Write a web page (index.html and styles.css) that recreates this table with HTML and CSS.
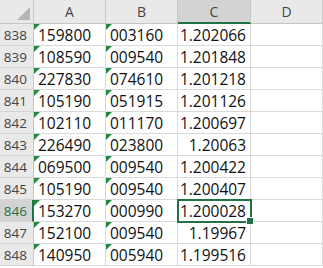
FILE: index.html
```html
<!DOCTYPE html>
<html>
<head>
<meta charset="utf-8">
<link rel="stylesheet" href="styles.css">
</head>
<body>
<div class="sheet">
  <div class="corner"><span class="tri"></span></div>
  <div class="colh">A</div>
  <div class="colh">B</div>
  <div class="colh sel">C</div>
  <div class="colh">D</div>

  <div class="rowh">838</div><div class="cell t">159800</div><div class="cell t">003160</div><div class="cell n">1.202066</div><div class="cell"></div>
  <div class="rowh">839</div><div class="cell t">108590</div><div class="cell t">009540</div><div class="cell n">1.201848</div><div class="cell"></div>
  <div class="rowh">840</div><div class="cell t">227830</div><div class="cell t">074610</div><div class="cell n">1.201218</div><div class="cell"></div>
  <div class="rowh">841</div><div class="cell t">105190</div><div class="cell t">051915</div><div class="cell n">1.201126</div><div class="cell"></div>
  <div class="rowh">842</div><div class="cell t">102110</div><div class="cell t">011170</div><div class="cell n">1.200697</div><div class="cell"></div>
  <div class="rowh">843</div><div class="cell t">226490</div><div class="cell t">023800</div><div class="cell n">1.20063</div><div class="cell"></div>
  <div class="rowh">844</div><div class="cell t">069500</div><div class="cell t">009540</div><div class="cell n">1.200422</div><div class="cell"></div>
  <div class="rowh">845</div><div class="cell t">105190</div><div class="cell t">009540</div><div class="cell n">1.200407</div><div class="cell"></div>
  <div class="rowh sel">846</div><div class="cell t">153270</div><div class="cell t">000990</div><div class="cell n active">1.200028<span class="handle"></span></div><div class="cell"></div>
  <div class="rowh">847</div><div class="cell t">152100</div><div class="cell t">009540</div><div class="cell n">1.19967</div><div class="cell"></div>
  <div class="rowh">848</div><div class="cell t">140950</div><div class="cell t">005940</div><div class="cell n">1.199516</div><div class="cell"></div>
</div>
</body>
</html>
```

FILE: styles.css
```css
html, body {
  margin: 0;
  padding: 0;
  background: #ffffff;
}
.sheet {
  display: grid;
  grid-template-columns: 34px 72px 72px 73px 72px;
  grid-template-rows: 24px repeat(11, 22px);
  font-family: "Open Sans", "Noto Sans", sans-serif;
}
.corner {
  position: relative;
  background: #e9e9e9;
  border-right: 1px solid #c6c6c6;
  border-bottom: 1px solid #c6c6c6;
}
.corner .tri {
  position: absolute;
  right: 3px;
  bottom: 3px;
  width: 0;
  height: 0;
  border-left: 13px solid transparent;
  border-bottom: 13px solid #b5b5b5;
}
.colh {
  background: #e9e9e9;
  border-right: 1px solid #c6c6c6;
  border-bottom: 1px solid #c6c6c6;
  font-size: 14px;
  color: #444;
  display: flex;
  align-items: center;
  justify-content: center;
  padding-bottom: 1px;
}
.colh.sel {
  background: #d3d3d3;
  border-bottom: 2px solid #217346;
  padding-bottom: 0;
}
.rowh {
  background: #e9e9e9;
  border-right: 1px solid #c6c6c6;
  border-bottom: 1px solid #d4d4d4;
  font-size: 13.5px;
  color: #444;
  display: flex;
  align-items: center;
  justify-content: flex-end;
  padding-right: 6px;
}
.rowh.sel {
  background: #d3d3d3;
  color: #217346;
  border-right: 2px solid #217346;
  padding-right: 5px;
}
.cell {
  position: relative;
  border-right: 1px solid #d9d9d9;
  border-bottom: 1px solid #d9d9d9;
  font-size: 15.5px;
  color: #111;
  display: flex;
  align-items: center;
  white-space: nowrap;
  overflow: visible;
}
.cell.t {
  padding-left: 4px;
}
.cell.t::before {
  content: "";
  position: absolute;
  left: 0;
  top: 0;
  width: 0;
  height: 0;
  border-top: 6px solid #1d8a3c;
  border-right: 6px solid transparent;
}
.cell.n {
  justify-content: flex-end;
  padding-right: 4px;
}
.cell.active {
  outline: 2px solid #217346;
  outline-offset: -1px;
  z-index: 2;
}
.handle {
  position: absolute;
  right: -4px;
  bottom: -4px;
  width: 6px;
  height: 6px;
  background: #217346;
  border: 1px solid #fff;
}
```
